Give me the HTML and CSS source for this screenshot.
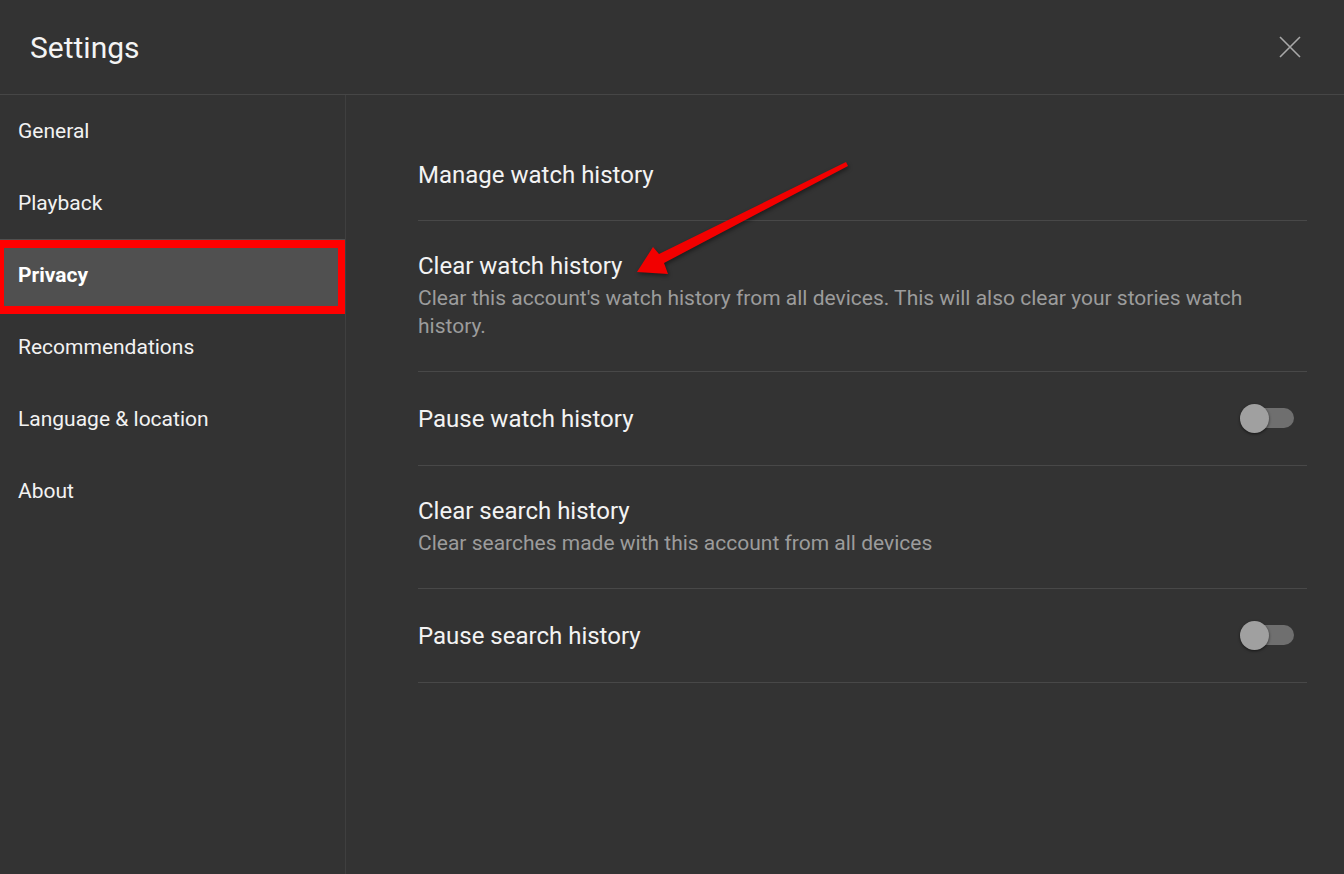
FILE: index.html
```html
<!DOCTYPE html>
<html>
<head>
<meta charset="utf-8">
<link rel="stylesheet" href="styles.css">
</head>
<body>
<header class="header">
  <h1 class="title">Settings</h1>
  <svg class="close" width="24" height="24" viewBox="0 0 24 24"><path d="M2 2 L22 22 M22 2 L2 22" stroke="#a8a8a8" stroke-width="1.6" fill="none"/></svg>
</header>
<div class="main">
  <nav class="sidebar">
    <div class="nav-item">General</div>
    <div class="nav-item">Playback</div>
    <div class="nav-item active">Privacy</div>
    <div class="nav-item">Recommendations</div>
    <div class="nav-item">Language &amp; location</div>
    <div class="nav-item">About</div>
  </nav>
  <section class="content">
    <div class="row">
      <div class="row-text"><div class="row-title">Manage watch history</div></div>
    </div>
    <div class="row">
      <div class="row-text">
        <div class="row-title">Clear watch history</div>
        <div class="row-desc">Clear this account's watch history from all devices. This will also clear your stories watch history.</div>
      </div>
    </div>
    <div class="row">
      <div class="row-text"><div class="row-title">Pause watch history</div></div>
      <div class="toggle"><span class="track"></span><span class="knob"></span></div>
    </div>
    <div class="row">
      <div class="row-text">
        <div class="row-title">Clear search history</div>
        <div class="row-desc">Clear searches made with this account from all devices</div>
      </div>
    </div>
    <div class="row">
      <div class="row-text"><div class="row-title">Pause search history</div></div>
      <div class="toggle"><span class="track"></span><span class="knob"></span></div>
    </div>
  </section>
</div>
<svg class="arrow" width="1344" height="874" viewBox="0 0 1344 874">
  <polygon points="637,272 653,247 659,254 846,162 848,166 664,263 668,274" fill="#f20000"/>
</svg>
</body>
</html>
```

FILE: styles.css
```css
* { box-sizing: border-box; }
html, body { margin: 0; padding: 0; }
body {
  background: #333333;
  font-family: Roboto, "Liberation Sans", Arial, sans-serif;
  color: #f1f1f1;
  width: 1344px;
  height: 874px;
  overflow: hidden;
  position: relative;
}
.header {
  height: 95px;
  border-bottom: 1px solid #464646;
  display: flex;
  align-items: center;
  justify-content: space-between;
  padding: 0 42px 0 30px;
}
.title {
  margin: 0;
  font-size: 30px;
  font-weight: 400;
  color: #f4f4f4;
  line-height: 36px;
  padding-top: 2px;
}
.close { display: block; margin-bottom: 1px; }
.main {
  display: flex;
  height: 779px;
}
.sidebar {
  width: 346px;
  border-right: 1px solid #3f3f3f;
  flex-shrink: 0;
}
.nav-item {
  height: 72px;
  padding-left: 18px;
  display: flex;
  align-items: center;
  font-size: 21px;
  color: #f2f2f2;
  position: relative;
}
.nav-item.active {
  background: #505050;
  font-weight: 700;
  color: #ffffff;
}
.nav-item.active::after {
  content: "";
  position: absolute;
  top: 1px;
  bottom: -3px;
  left: 0;
  right: 0;
  border: 8px solid #ff0000;
  border-left-width: 4px;
  border-right-width: 7px;
}
.content {
  flex: 1;
  padding: 35px 37px 0 72px;
}
.row {
  display: flex;
  align-items: center;
  justify-content: space-between;
  padding: 31px 0 31px;
  border-bottom: 1px solid #484848;
}
.row-text { flex: 1; }
.row-title {
  font-size: 24px;
  line-height: 28px;
  color: #f3f3f3;
}
.row-desc {
  margin-top: 4px;
  font-size: 21px;
  line-height: 28px;
  color: #9c9c9c;
}
.toggle {
  position: relative;
  width: 54px;
  height: 31px;
  margin-right: 13px;
  flex-shrink: 0;
}
.track {
  position: absolute;
  left: 4px;
  top: 5px;
  width: 50px;
  height: 20px;
  border-radius: 10px;
  background: #6f6f6f;
}
.knob {
  position: absolute;
  left: 0;
  top: 1px;
  width: 29px;
  height: 29px;
  border-radius: 50%;
  background: #a0a0a0;
  box-shadow: 0 1px 3px rgba(0,0,0,0.6);
}
.arrow {
  position: absolute;
  left: 0;
  top: 0;
  pointer-events: none;
  filter: drop-shadow(1px 2px 2px rgba(0,0,0,0.45));
}
```
